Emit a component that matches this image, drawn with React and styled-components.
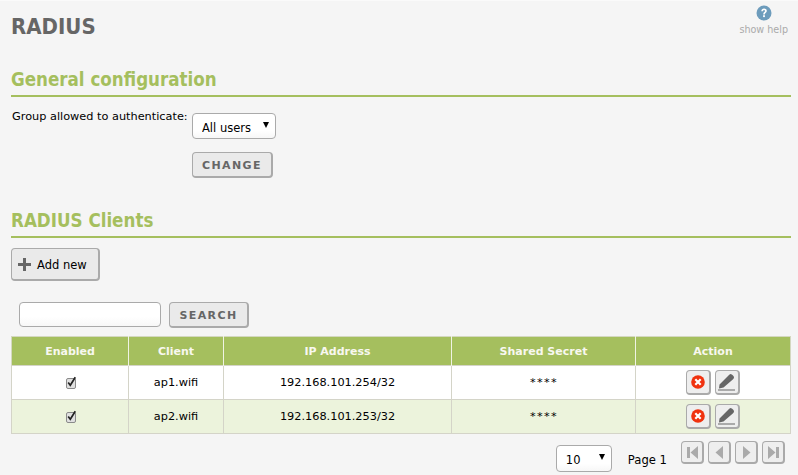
import React from "react";
import styled, { createGlobalStyle } from "styled-components";

const GlobalStyle = createGlobalStyle`
  html, body {
    margin: 0;
    padding: 0;
    background: #f5f5f5;
  }
  body {
    font-family: "DejaVu Sans", Verdana, sans-serif;
    font-size: 11.3px;
    color: #000;
  }
`;

const Page = styled.div`
  width: 798px;
  height: 475px;
  box-sizing: border-box;
  overflow: hidden;
  padding: 1px 7px 0 11px;
  border-top: 1px solid #fafafa;
`;

const TitleBar = styled.div`
  display: flex;
  justify-content: space-between;
  align-items: flex-start;
  height: 62px;
`;

const Title = styled.h1`
  margin: 12px 0 0;
  font-family: "DejaVu Sans Condensed", "DejaVu Sans", sans-serif;
  font-size: 22px;
  line-height: 26px;
  font-weight: 700;
  color: #666;
`;

const Help = styled.div`
  display: flex;
  flex-direction: column;
  align-items: center;
  margin: 3px 3px 0 0;
  color: #aaa;
  font-size: 9.6px;
  line-height: 12px;
  gap: 3px;
`;

const SectionTitle = styled.h2`
  margin: 0;
  height: 31px;
  font-family: "DejaVu Sans Condensed", "DejaVu Sans", sans-serif;
  font-size: 18.6px;
  line-height: 32px;
  font-weight: 700;
  color: #a5bf5e;
  border-bottom: 2px solid #a5bf5e;
`;

const FormRow = styled.div`
  display: flex;
  align-items: flex-start;
  margin-top: 13px;
`;

const Label = styled.label`
  width: 181px;
  padding-left: 1px;
  box-sizing: border-box;
  line-height: 14px;
`;

const SelectBox = styled.div`
  position: relative;
  width: ${({ $width }) => $width}px;
  height: ${({ $height }) => $height}px;
  margin-top: ${({ $top }) => $top}px;
`;

const Select = styled.select`
  appearance: none;
  width: 100%;
  height: 100%;
  box-sizing: border-box;
  padding: 3px 0 0 9px;
  border: 1px solid #aaa;
  border-radius: 4px;
  background: linear-gradient(#fff, #fff 70%, #f7f7f7);
  font-family: inherit;
  font-size: 11.5px;
  color: #000;
`;

const Arrow = styled.span`
  position: absolute;
  top: 9px;
  right: 7px;
  width: 0;
  height: 0;
  border-left: 3px solid transparent;
  border-right: 3px solid transparent;
  border-top: 6px solid #000;
  pointer-events: none;
`;

const Button = styled.button`
  box-sizing: border-box;
  width: ${({ $width }) => $width}px;
  height: 26px;
  padding: 2px 0 0;
  border: 1px solid #aaa;
  border-bottom: 2px solid #aaa;
  border-right: 2px solid #aaa;
  border-radius: 4px;
  background: #eaeaea;
  font-family: inherit;
  font-size: 11px;
  font-weight: 700;
  letter-spacing: 1.4px;
  color: #666;
`;

const ChangeRow = styled.div`
  margin: 13px 0 0 181px;
  height: 53px;
`;

const AddButton = styled.button`
  display: flex;
  align-items: center;
  gap: 6px;
  box-sizing: border-box;
  width: 89px;
  height: 33px;
  margin-top: 10px;
  padding: 1px 0 0 6px;
  border: 1px solid #aaa;
  border-bottom: 2px solid #aaa;
  border-right: 2px solid #aaa;
  border-radius: 4px;
  background: #eaeaea;
  font-family: inherit;
  font-size: 11.5px;
  color: #000;
`;

const SearchRow = styled.div`
  display: flex;
  align-items: flex-start;
  gap: 8px;
  margin: 21px 0 8px 8px;
`;

const SearchInput = styled.input`
  box-sizing: border-box;
  width: 142px;
  height: 25px;
  border: 1px solid #aaa;
  border-radius: 4px;
  background: linear-gradient(#fff, #fff 60%, #f7f7f7);
`;

const Table = styled.table`
  width: 780px;
  table-layout: fixed;
  border-collapse: collapse;
  border: 1px solid #d4d8c0;
`;

const Th = styled.th`
  width: ${({ $width }) => $width}px;
  height: 28px;
  padding: 0;
  background: #a5bf5e;
  border-left: 1px solid #f0f3e4;
  color: #f8f8f0;
  font-size: 11px;
  font-weight: 700;
  &:first-child {
    border-left: none;
  }
`;

const Row = styled.tr`
  background: ${({ $alt }) => ($alt ? "#ecf3dc" : "#fff")};
`;

const Td = styled.td`
  height: 33px;
  padding: 0;
  text-align: center;
  border: 1px solid #d4d4c8;
`;

const Secret = styled.span`
  letter-spacing: 1.4px;
  padding-left: 1px;
`;

const Actions = styled.div`
  display: flex;
  justify-content: center;
  gap: 4px;
`;

const ActionButton = styled.button`
  display: flex;
  align-items: center;
  justify-content: center;
  box-sizing: border-box;
  width: 25px;
  height: 25px;
  padding: 0;
  border: 1px solid #aaa;
  border-bottom: 2px solid #aaa;
  border-right: 2px solid #aaa;
  border-radius: 4px;
  background: #eee;
`;

const Pager = styled.div`
  display: flex;
  align-items: flex-start;
  margin: 7px 6px 0 0;
  justify-content: flex-end;
`;

const PageLabel = styled.span`
  margin: 12px 14px 0 16px;
  font-size: 11.6px;
  line-height: 14px;
`;

const PagerButtons = styled.div`
  display: flex;
  gap: 4px;
`;

const PagerButton = styled.button`
  display: flex;
  align-items: center;
  justify-content: center;
  box-sizing: border-box;
  width: 23px;
  height: 23px;
  padding: 0;
  border: 1px solid #aaa;
  border-bottom: 2px solid #aaa;
  border-right: 2px solid #aaa;
  border-radius: 4px;
  background: #eee;
`;

const CheckSvg = styled.svg`
  display: block;
  margin: 0 auto;
`;

const HelpIcon = () => (
  <svg width="16" height="16" viewBox="0 0 16 16">
    <circle cx="8" cy="8" r="7.5" fill="#6d9cbc" />
    <path d="M5.3 6.2C5.4 4.5 6.6 3.6 8.1 3.6C9.7 3.6 10.8 4.5 10.8 5.9C10.8 7.6 8.8 7.7 8.8 9.4H7.2C7.2 7.2 9 7.1 9 6C9 5.4 8.6 5.1 8 5.1C7.4 5.1 7.1 5.5 7 6.2Z" fill="#fff" />
    <rect x="7.1" y="10.2" width="1.8" height="1.9" fill="#fff" />
  </svg>
);

const PlusIcon = () => (
  <svg width="13" height="13" viewBox="0 0 13 13">
    <path d="M5 0H8V5H13V8H8V13H5V8H0V5H5Z" fill="#666" />
  </svg>
);

const CheckIcon = () => (
  <CheckSvg width="13" height="13" viewBox="0 0 13 13">
    <rect x="2.5" y="2.5" width="9" height="10" rx="1.5" fill="#e0e0e0" stroke="#8a8a8a" />
    <path d="M4.2 6.5L6.3 9.3L11.3 1.2" fill="none" stroke="#222" strokeWidth="1.7" />
  </CheckSvg>
);

const DeleteIcon = () => (
  <svg width="14" height="14" viewBox="0 0 14 14">
    <circle cx="7" cy="7" r="6.8" fill="#f0320f" />
    <path d="M4.3 4.3L9.7 9.7M9.7 4.3L4.3 9.7" stroke="#fff" strokeWidth="2.2" />
  </svg>
);

const EditIcon = () => (
  <svg width="18" height="18" viewBox="0 0 18 18">
    <path d="M1.5 11.5L10.5 2.5C11.2 1.8 12.3 0.8 13.2 1.2C14.5 1.8 15.8 3 16 4.2C16.1 5 15.4 5.8 14.8 6.4L5.5 14.5L1 15.5Z" fill="#666" />
    <rect x="0" y="16.5" width="17" height="1" fill="#666" />
  </svg>
);

const PagerIcon = ({ d }) => (
  <svg width="15" height="15" viewBox="0 0 15 15">
    <path d={d} fill="#aaa" />
  </svg>
);

const pagerPaths = [
  "M2 2H5V13H2ZM13 1V14L5.5 7.5Z",
  "M11 1V14L3.5 7.5Z",
  "M4 1V14L11.5 7.5Z",
  "M2 1V14L9.5 7.5ZM10 2H13V13H10Z",
];

const clients = [
  { name: "ap1.wifi", ip: "192.168.101.254/32" },
  { name: "ap2.wifi", ip: "192.168.101.253/32" },
];

export default function App() {
  return (
    <Page>
      <GlobalStyle />
      <TitleBar>
        <Title>RADIUS</Title>
        <Help>
          <HelpIcon />
          show help
        </Help>
      </TitleBar>

      <SectionTitle>General configuration</SectionTitle>
      <FormRow>
        <Label>Group allowed to authenticate:</Label>
        <SelectBox $width={84} $height={26} $top={3}>
          <Select defaultValue="all">
            <option value="all">All users</option>
          </Select>
          <Arrow />
        </SelectBox>
      </FormRow>
      <ChangeRow>
        <Button $width={81}>CHANGE</Button>
      </ChangeRow>

      <SectionTitle>RADIUS Clients</SectionTitle>
      <AddButton>
        <PlusIcon />
        Add new
      </AddButton>
      <SearchRow>
        <SearchInput />
        <Button $width={80}>SEARCH</Button>
      </SearchRow>

      <Table>
        <thead>
          <tr>
            <Th $width={116}>Enabled</Th>
            <Th $width={94}>Client</Th>
            <Th $width={227}>IP Address</Th>
            <Th $width={183}>Shared Secret</Th>
            <Th>Action</Th>
          </tr>
        </thead>
        <tbody>
          {clients.map((client, i) => (
            <Row key={client.name} $alt={i % 2 === 1}>
              <Td>
                <CheckIcon />
              </Td>
              <Td>{client.name}</Td>
              <Td>{client.ip}</Td>
              <Td>
                <Secret>****</Secret>
              </Td>
              <Td>
                <Actions>
                  <ActionButton>
                    <DeleteIcon />
                  </ActionButton>
                  <ActionButton>
                    <EditIcon />
                  </ActionButton>
                </Actions>
              </Td>
            </Row>
          ))}
        </tbody>
      </Table>

      <Pager>
        <SelectBox $width={56} $height={27} $top={4}>
          <Select defaultValue="10">
            <option value="10">10</option>
          </Select>
          <Arrow />
        </SelectBox>
        <PageLabel>Page 1</PageLabel>
        <PagerButtons>
          {pagerPaths.map((d) => (
            <PagerButton key={d}>
              <PagerIcon d={d} />
            </PagerButton>
          ))}
        </PagerButtons>
      </Pager>
    </Page>
  );
}
